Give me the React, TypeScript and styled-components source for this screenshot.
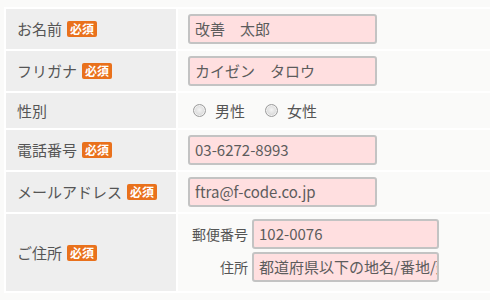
import React from "react";
import styled, { createGlobalStyle } from "styled-components";

const Global = createGlobalStyle`
  html, body {
    margin: 0;
    padding: 0;
    background: #fafaf9;
    overflow: hidden;
  }
  body {
    font-family: "Noto Sans CJK JP", "Noto Sans", sans-serif;
    color: #555;
  }
`;

const Page = styled.div`
  padding: 7px 0 0 4px;
`;

const Table = styled.div`
  display: grid;
  grid-template-columns: 170px 330px;
  gap: 2px;
  padding: 2px;
  background: #ffffff;
  width: max-content;
`;

const Label = styled.div`
  background: #eeeeee;
  display: flex;
  align-items: center;
  padding: 0 11px;
  font-size: 15px;
  line-height: 20px;
  color: #555;
`;

const Badge = styled.span`
  display: inline-flex;
  align-items: center;
  justify-content: center;
  margin-left: 5px;
  width: 30px;
  height: 16px;
  border-radius: 2px;
  background: #e9711c;
  color: #fff;
  font-size: 12px;
  font-weight: 700;
  line-height: 16px;
`;

const Cell = styled.div<{ $h: number; $pb?: number }>`
  background: #fafaf9;
  box-sizing: border-box;
  min-height: ${(p) => p.$h}px;
  padding: 5px 10px ${(p) => p.$pb ?? 5}px;
  display: flex;
  align-items: center;
`;

const Input = styled.div<{ $w: number }>`
  box-sizing: border-box;
  width: ${(p) => p.$w}px;
  height: 30px;
  border: 2px solid #c3c3c3;
  border-radius: 3px;
  background: #ffdfe0;
  padding: 0 5px;
  display: flex;
  align-items: center;
  font-size: 15px;
  line-height: 20px;
  color: #5c5c5c;
  white-space: nowrap;
  overflow: hidden;
`;

const RadioGroup = styled.div`
  display: flex;
  align-items: center;
  gap: 20px;
  padding-left: 5px;
`;

const RadioItem = styled.label`
  display: flex;
  align-items: center;
  gap: 9px;
  font-size: 15px;
  line-height: 20px;
  color: #555;
`;

const RadioDot = styled.span`
  box-sizing: border-box;
  width: 13px;
  height: 13px;
  border-radius: 50%;
  border: 1px solid #9c9c9c;
  background: radial-gradient(circle at 50% 45%, #f4f4f4 0%, #e2e2e2 45%, #c6c6c6 100%);
  box-shadow: inset 0 0 0 1px #f2f2f2;
`;

const AddressGrid = styled.div`
  display: grid;
  grid-template-columns: 60px 187px;
  column-gap: 4px;
  row-gap: 3px;
  align-items: center;
`;

const SubLabel = styled.span`
  text-align: right;
  font-size: 14px;
  line-height: 18px;
  color: #555;
`;

type Row = { label: string; required: boolean; value: string };

const rows: Row[] = [
  { label: "お名前", required: true, value: "改善　太郎" },
  { label: "フリガナ", required: true, value: "カイゼン　タロウ" },
];

const rows2: Row[] = [
  { label: "電話番号", required: true, value: "03-6272-8993" },
  { label: "メールアドレス", required: true, value: "ftra@f-code.co.jp" },
];

const FieldRow = ({ label, required, value }: Row) => (
  <>
    <Label>
      {label}
      {required && <Badge>必須</Badge>}
    </Label>
    <Cell $h={40}>
      <Input $w={189}>{value}</Input>
    </Cell>
  </>
);

export default function App() {
  return (
    <>
      <Global />
      <Page>
        <Table>
          {rows.map((r) => (
            <FieldRow key={r.label} {...r} />
          ))}
          <Label>性別</Label>
          <Cell $h={35}>
            <RadioGroup>
              <RadioItem>
                <RadioDot />
                男性
              </RadioItem>
              <RadioItem>
                <RadioDot />
                女性
              </RadioItem>
            </RadioGroup>
          </Cell>
          {rows2.map((r) => (
            <FieldRow key={r.label} {...r} />
          ))}
          <Label>
            ご住所
            <Badge>必須</Badge>
          </Label>
          <Cell $h={76} $pb={9}>
            <AddressGrid>
              <SubLabel>郵便番号</SubLabel>
              <Input $w={187}>102-0076</Input>
              <SubLabel>住所</SubLabel>
              <Input $w={187}>都道府県以下の地名/番地/建物名</Input>
            </AddressGrid>
          </Cell>
        </Table>
      </Page>
    </>
  );
}
